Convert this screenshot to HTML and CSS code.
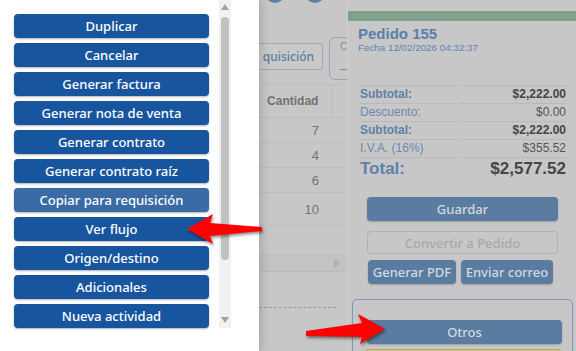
FILE: index.html
```html
<!DOCTYPE html>
<html lang="es">
<head>
    <meta charset="UTF-8">
    <meta name="viewport" content="width=device-width, initial-scale=1.0">
    <title>Pedido 155 - Acciones</title>
    <link rel="stylesheet" href="styles.css">
</head>
<body>
<div class="screen">

    <!-- menu de acciones -->
    <aside class="menu">
        <div class="menu-list">
            <button class="menu-btn">Duplicar</button>
            <button class="menu-btn">Cancelar</button>
            <button class="menu-btn">Generar factura</button>
            <button class="menu-btn">Generar nota de venta</button>
            <button class="menu-btn">Generar contrato</button>
            <button class="menu-btn">Generar contrato raíz</button>
            <button class="menu-btn hover">Copiar para requisición</button>
            <button class="menu-btn">Ver flujo</button>
            <button class="menu-btn">Origen/destino</button>
            <button class="menu-btn">Adicionales</button>
            <button class="menu-btn">Nueva actividad</button>
        </div>
        <div class="scrollbar">
            <span class="sb-up"></span>
            <span class="sb-thumb"></span>
            <span class="sb-down"></span>
        </div>
    </aside>

    <!-- pagina detras del modal -->
    <main class="backdrop">
        <section class="doc">
            <div class="dots">
                <span class="dot"></span>
                <span class="dot"></span>
            </div>
            <div class="toolbar">
                <button class="ghost-btn">quisición</button>
                <div class="select-box">
                    <span class="sel-label">C</span>
                    <span class="sel-line"></span>
                </div>
            </div>
            <table class="items">
                <colgroup><col class="col-qty"><col class="col-next"></colgroup>
                <tr class="head"><th class="qty">Cantidad</th><th></th></tr>
                <tr><td class="qty">7</td><td></td></tr>
                <tr><td class="qty">4</td><td></td></tr>
                <tr><td class="qty">6</td><td></td></tr>
                <tr class="tall"><td class="qty">10</td><td></td></tr>
            </table>
            <div class="hscroll"><span class="hs-arrow"></span></div>
            <div class="dashed"></div>
        </section>

        <section class="order">
            <div class="order-bar"></div>
            <h2 class="order-title">Pedido 155</h2>
            <div class="order-date">Fecha 12/02/2026 04:32:37</div>

            <table class="totals">
                <tr class="strong"><td>Subtotal:</td><td>$2,222.00</td></tr>
                <tr><td>Descuento:</td><td>$0.00</td></tr>
                <tr class="strong"><td>Subtotal:</td><td>$2,222.00</td></tr>
                <tr><td>I.V.A. (16%)</td><td>$355.52</td></tr>
                <tr class="strong grand"><td>Total:</td><td>$2,577.52</td></tr>
            </table>

            <button class="act-btn wide">Guardar</button>
            <button class="act-btn outline wide">Convertir a Pedido</button>
            <div class="act-row">
                <button class="act-btn pdf">Generar PDF</button>
                <button class="act-btn mail">Enviar correo</button>
            </div>

            <div class="more-box">
                <button class="act-btn otros">Otros</button>
                <div class="yellow-strip"></div>
            </div>
        </section>
    </main>

    <!-- flechas de indicacion -->
    <svg class="arrows" width="576" height="351" viewBox="0 0 576 351">
        <polygon points="187,229 213,214 210,223 262,227 262,231 210,236 213,244"/>
        <polygon points="306,331 362,323 358,314 385,329 360,344 362,337 306,336"/>
    </svg>
</div>
</body>
</html>
```

FILE: styles.css
```css
body {
    margin: 0;
    padding: 0;
    background-color: #c7c7c7;
    font-family: "Liberation Sans", Arial, sans-serif;
    overflow: hidden;
}
button {
    font-family: "Noto Sans", sans-serif;
    border: none;
    padding: 0;
    cursor: pointer;
}
.screen {
    position: relative;
    display: flex;
    width: 576px;
    height: 351px;
    overflow: hidden;
}

/* menu */
.menu {
    width: 259px;
    flex-shrink: 0;
    background-color: #fff;
    display: flex;
    align-items: flex-start;
    box-shadow: 2px 0 10px rgba(0, 0, 0, 0.18);
    position: relative;
    z-index: 1;
}
.menu-list {
    display: flex;
    flex-direction: column;
    gap: 5px;
    padding: 14px 0 0 14px;
}
.menu-btn {
    width: 195px;
    height: 24px;
    background-color: #17569e;
    color: #fff;
    font-size: 13px;
    font-weight: 500;
    border-radius: 4px;
    box-shadow: 0 1px 2px rgba(0, 0, 0, 0.3);
}
.menu-btn.hover {
    background-color: #3a6ba6;
}
.scrollbar {
    margin-left: 10px;
    width: 12px;
    height: 328px;
    background-color: #f1f1f1;
    display: flex;
    flex-direction: column;
    align-items: center;
}
.sb-up,
.sb-down {
    width: 0;
    height: 0;
    border-left: 4px solid transparent;
    border-right: 4px solid transparent;
}
.sb-up {
    margin-top: 4px;
    border-bottom: 6px solid #a3a3a3;
}
.sb-thumb {
    margin-top: 7px;
    width: 8px;
    height: 243px;
    background-color: #c1c1c1;
    border-radius: 4px;
}
.sb-down {
    margin-top: 57px;
    border-top: 6px solid #a3a3a3;
}

/* pagina de fondo */
.backdrop {
    flex: 1;
    display: flex;
}
.doc {
    width: 88px;
    flex-shrink: 0;
    overflow: hidden;
}
.dots {
    display: flex;
    gap: 20px;
    padding-left: 6px;
    height: 3px;
}
.dot {
    width: 20px;
    height: 20px;
    margin-top: -17px;
    border-radius: 50%;
    background-color: #5d7fa6;
}
.toolbar {
    display: flex;
    align-items: flex-start;
    gap: 6px;
    margin: 34px 0 0 -6px;
}
.ghost-btn {
    margin-top: 6px;
    width: 70px;
    height: 27px;
    flex-shrink: 0;
    background-color: #c9c9c9;
    border: 1px solid #a9a9a9;
    border-left: none;
    border-radius: 0 4px 4px 0;
    color: #5b7ca3;
    font-size: 12px;
    font-weight: 500;
    text-align: right;
    padding-right: 8px;
}
.select-box {
    width: 30px;
    height: 43px;
    flex-shrink: 0;
    box-sizing: border-box;
    border: 1px solid #8fa7c6;
    border-radius: 6px;
    padding: 3px 0 0 10px;
}
.sel-label {
    display: block;
    font-size: 10px;
    color: #8a8a8a;
}
.sel-line {
    display: block;
    width: 8px;
    margin-top: 17px;
    border-top: 1px solid #8a8a8a;
}
.items {
    margin: 4px 0 0 -4px;
    border-collapse: collapse;
    table-layout: fixed;
    width: 120px;
}
.col-qty {
    width: 76px;
}
.col-next {
    width: 44px;
}
.items th,
.items td {
    padding: 0;
    border-bottom: 1px solid #bcbcbc;
}
.items .head th {
    height: 32px;
    border-top: 1px solid #bcbcbc;
    font-size: 12px;
    color: #727272;
    text-align: center;
}
.items th.qty {
    border-right: 1px solid #bcbcbc;
}
.items td {
    height: 24px;
    text-align: right;
    padding-right: 12px;
    font-size: 13px;
    color: #737373;
}
.items .tall td {
    height: 32px;
}
.hscroll {
    margin-top: 28px;
    height: 16px;
    border-top: 1px solid #bdbdbd;
    border-bottom: 1px solid #bbbbbb;
    background-color: #c3c3c3;
    display: flex;
    align-items: center;
    padding-left: 75px;
}
.hs-arrow {
    width: 0;
    height: 0;
    border-top: 5px solid transparent;
    border-bottom: 5px solid transparent;
    border-left: 6px solid #b0b0b0;
}
.dashed {
    margin-top: 35px;
    width: 77px;
    border-top: 1px dashed #9a9a9a;
}

/* panel del pedido */
.order {
    width: 229px;
    flex-shrink: 0;
    box-sizing: border-box;
    border-left: 1px solid #cfcfcf;
    padding-top: 11px;
}
.order-bar {
    height: 10px;
    background-color: #7fa18e;
}
.order-title {
    margin: 4px 0 0 10px;
    font-size: 15px;
    line-height: 17px;
    color: #5b7fa8;
}
.order-date {
    margin-left: 10px;
    font-size: 9.8px;
    line-height: 11px;
    color: #6283ab;
}
.totals {
    margin: 32px 0 0 9px;
    width: 213px;
    border-collapse: separate;
    border-spacing: 3px 0;
}
.totals td {
    padding: 0;
    line-height: 17px;
    border-top: 1px solid #b9b9b9;
    font-size: 12px;
    color: #6b8ab0;
}
.totals td:first-child {
    width: 96px;
}
.totals td:last-child {
    text-align: right;
    padding-right: 1px;
    color: #555;
}
.totals .strong td {
    font-weight: bold;
    color: #5f80a7;
}
.totals .strong td:last-child {
    color: #454545;
}
.totals .grand td {
    font-size: 17px;
    line-height: 22px;
}
.act-btn {
    display: block;
    height: 24px;
    border-radius: 4px;
    background-color: #5b7ca1;
    color: #d3d9e0;
    font-size: 13px;
    font-weight: 500;
    box-shadow: 0 1px 2px rgba(0, 0, 0, 0.2);
}
.act-btn.wide {
    width: 191px;
    margin-left: 19px;
}
.act-btn.wide:first-of-type {
    margin-top: 17px;
}
.act-btn.outline {
    margin-top: 10px;
    height: 23px;
    background-color: transparent;
    border: 1px solid #b2b2b2;
    color: #a8a8a8;
    box-shadow: none;
}
.act-row {
    display: flex;
    gap: 5px;
    margin: 6px 0 0 20px;
}
.act-btn.pdf {
    width: 88px;
}
.act-btn.mail {
    width: 92px;
}
.more-box {
    margin: 15px 0 0 4px;
    width: 221px;
    height: 70px;
    box-sizing: border-box;
    border: 1px solid #7c98ba;
    border-radius: 5px;
    padding-top: 20px;
}
.act-btn.otros {
    width: 195px;
    margin-left: 14px;
}
.yellow-strip {
    margin: 5px 0 0 12px;
    width: 196px;
    height: 10px;
    box-sizing: border-box;
    background-color: #cbc28d;
    border: 1px solid #b3aa72;
    border-radius: 3px;
}

/* flechas */
.arrows {
    position: absolute;
    top: 0;
    left: 0;
    z-index: 5;
    pointer-events: none;
}
.arrows polygon {
    fill: #ff0000;
    filter: drop-shadow(1px 2px 1.5px rgba(0, 0, 0, 0.45));
}
```
